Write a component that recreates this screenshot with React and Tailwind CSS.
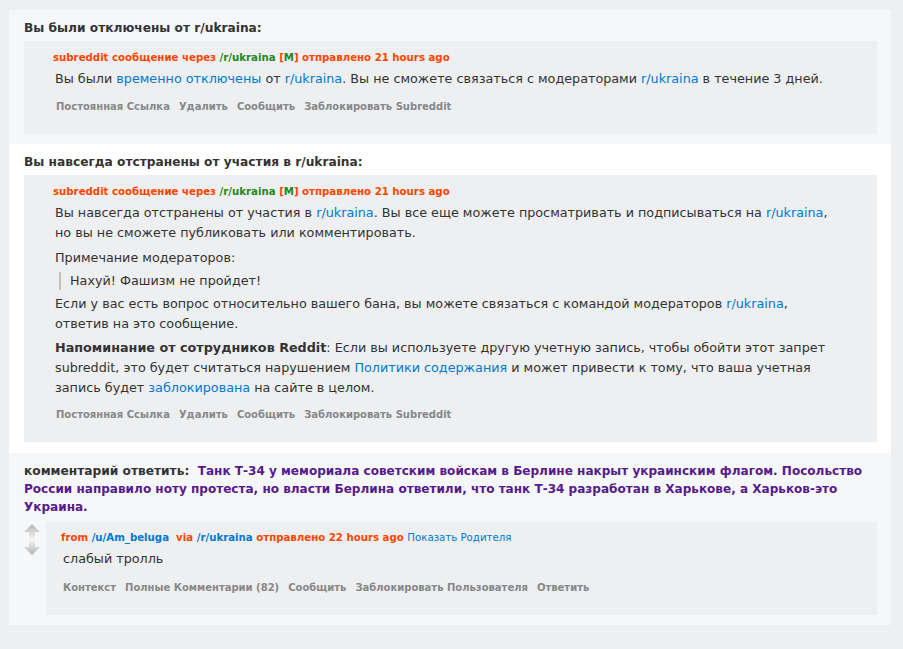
import React from 'react';

const font = { fontFamily: '"DejaVu Sans", Verdana, sans-serif' };

function Tagline({ children }) {
  return <div className="text-[10.2px] font-bold leading-[14px] text-[#ff4500]">{children}</div>;
}

function Buttons({ items }) {
  return (
    <ul className="flex gap-[9px] text-[10px] font-bold leading-[14px] text-[#888]">
      {items.map((b) => (
        <li key={b}>{b}</li>
      ))}
    </ul>
  );
}

function A({ children }) {
  return <span className="text-[#0079d3]">{children}</span>;
}

function Arrows() {
  return (
    <div className="flex flex-col items-center gap-[1px] w-[16px] pt-[2px]">
      <svg width="16" height="15" viewBox="0 0 16 15">
        <defs>
          <linearGradient id="ga" x1="0" y1="0" x2="0" y2="1">
            <stop offset="0" stopColor="#b4b4b4" />
            <stop offset="1" stopColor="#f2f2f2" />
          </linearGradient>
        </defs>
        <path d="M8 0 L16 8 L11 8 L11 15 L5 15 L5 8 L0 8 Z" fill="url(#ga)" />
      </svg>
      <svg width="16" height="15" viewBox="0 0 16 15">
        <defs>
          <linearGradient id="gb" x1="0" y1="0" x2="0" y2="1">
            <stop offset="0" stopColor="#f2f2f2" />
            <stop offset="1" stopColor="#b4b4b4" />
          </linearGradient>
        </defs>
        <path d="M5 0 L11 0 L11 7 L16 7 L8 15 L0 7 L5 7 Z" fill="url(#gb)" />
      </svg>
    </div>
  );
}

export default function App() {
  const msgButtons = ['Постоянная Ссылка', 'Удалить', 'Сообщить', 'Заблокировать Subreddit'];
  const head = (
    <Tagline>
      subreddit сообщение через <span className="text-[#228822]">/r/ukraina</span>{' '}
      [<span className="text-[#228822]">M</span>] отправлено 21 hours ago
    </Tagline>
  );

  return (
    <div className="min-h-[649px] bg-[#edeff1] pt-[10px] px-[9px] text-[#333]" style={font}>
      <div className="w-[882px]">
        {/* muted */}
        <section className="bg-[#f6f7f8] pt-[9px] pb-[10px] pl-[15px] pr-[14px]">
          <h2 className="text-[12.2px] font-bold leading-[18px] text-[#333] mb-[4px]">Вы были отключены от r/ukraina:</h2>
          <div className="bg-[#edeff1] pl-[29px] pr-[20px] pt-[10px] pb-[20px]">
            {head}
            <p className="text-[12.75px] leading-[20px] mt-[4px] ml-[2px]">
              Вы были <A>временно отключены</A> от <A>r/ukraina</A>. Вы не сможете связаться с модераторами <A>r/ukraina</A> в течение 3 дней.
            </p>
            <div className="mt-[11px] ml-[3px]">
              <Buttons items={msgButtons} />
            </div>
          </div>
        </section>

        {/* banned */}
        <section className="bg-white pt-[9px] pb-[11px] pl-[15px] pr-[14px]">
          <h2 className="text-[12.2px] font-bold leading-[18px] text-[#333] mb-[4px]">Вы навсегда отстранены от участия в r/ukraina:</h2>
          <div className="bg-[#edeff1] pl-[29px] pr-[42px] pt-[10px] pb-[20px]">
            {head}
            <div className="text-[12.75px] leading-[20px] mt-[4px] ml-[2px] flex flex-col gap-[4px]">
              <p className="mb-[1px]">
                Вы навсегда отстранены от участия в <A>r/ukraina</A>. Вы все еще можете просматривать и подписываться на <A>r/ukraina</A>, но вы не сможете публиковать или комментировать.
              </p>
              <p>Примечание модераторов:</p>
              <blockquote className="border-l-[2px] border-[#c5c1ad] pl-[9px] ml-[4px] leading-[18px]">Нахуй! Фашизм не пройдет!</blockquote>
              <p>
                Если у вас есть вопрос относительно вашего бана, вы можете связаться с командой модераторов <A>r/ukraina</A>, ответив на это сообщение.
              </p>
              <p>
                <strong className="font-bold">Напоминание от сотрудников Reddit</strong>: Если вы используете другую учетную запись, чтобы обойти этот запрет subreddit, это будет считаться нарушением <A>Политики содержания</A> и может привести к тому, что ваша учетная запись будет <A>заблокирована</A> на сайте в целом.
              </p>
            </div>
            <div className="mt-[10px] ml-[3px]">
              <Buttons items={msgButtons} />
            </div>
          </div>
        </section>

        {/* comment reply */}
        <section className="bg-[#f6f7f8] pt-[9px] pb-[10px] pl-[15px] pr-[14px]">
          <h2 className="text-[12.2px] font-bold leading-[18px] text-[#333] mb-[6px]">
            комментарий ответить:&nbsp;&nbsp;<span className="text-[12.05px] text-[#551a8b]">Танк Т-34 у мемориала советским войскам в Берлине накрыт украинским флагом. Посольство России направило ноту протеста, но власти Берлина ответили, что танк Т-34 разработан в Харькове, а Харьков-это Украина.</span>
          </h2>
          <div className="flex">
            <div className="w-[22px]">
              <Arrows />
            </div>
            <div className="flex-1 bg-[#edeff1] pl-[15px] pr-[20px] pt-[9px] pb-[20px]">
              <div className="text-[10.2px] font-bold leading-[14px] text-[#ff4500]">
                from <span className="text-[#0079d3]">/u/Am_beluga</span>&nbsp; via <span className="text-[#0079d3]">/r/ukraina</span> отправлено 22 hours ago{' '}
                <span className="font-normal text-[#0079d3]">Показать Родителя</span>
              </div>
              <p className="text-[12.75px] leading-[20px] mt-[4px] ml-[2px]">слабый тролль</p>
              <div className="mt-[12px] ml-[2px]">
                <Buttons items={['Контекст', 'Полные Комментарии (82)', 'Сообщить', 'Заблокировать Пользователя', 'Ответить']} />
              </div>
            </div>
          </div>
        </section>
      </div>
    </div>
  );
}
